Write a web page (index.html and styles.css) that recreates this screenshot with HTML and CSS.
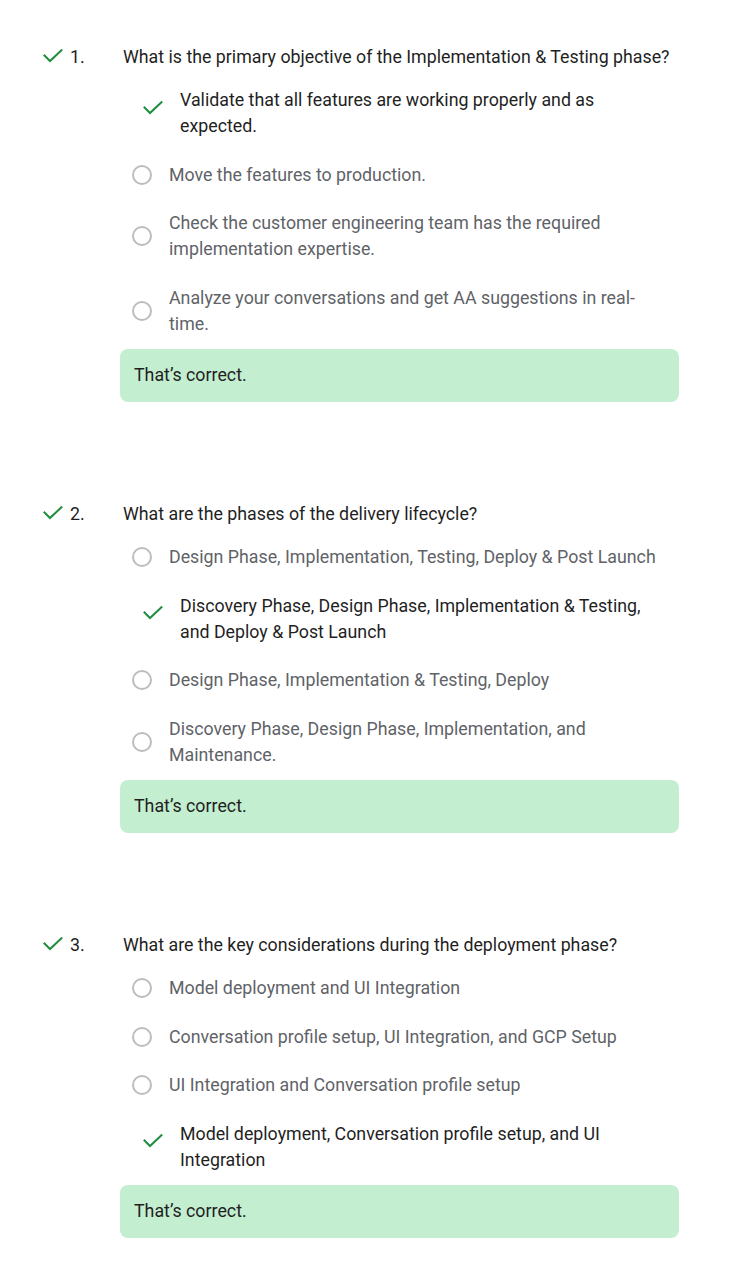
FILE: index.html
```html
<!DOCTYPE html>
<html lang="en">
<head>
<meta charset="utf-8">
<title>Quiz results</title>
<link rel="stylesheet" href="styles.css">
</head>
<body>
<div class="quiz">

  <section class="question">
    <div class="q-head">
      <div class="q-mark">
        <svg class="check" width="20" height="14" viewBox="0 0 20 14"><polyline points="1.5,6.5 7,12 18.5,1.2"/></svg>
        <span class="q-num">1.</span>
      </div>
      <div class="q-text">What is the primary objective of the Implementation &amp; Testing phase?</div>
    </div>
    <div class="q-body">
      <div class="options">
        <div class="option correct">
          <svg class="check" width="20" height="14" viewBox="0 0 20 14"><polyline points="1.5,6.5 7,12 18.5,1.2"/></svg>
          <span class="opt-text">Validate that all features are working properly and as expected.</span>
        </div>
        <div class="option">
          <span class="radio"></span>
          <span class="opt-text">Move the features to production.</span>
        </div>
        <div class="option">
          <span class="radio"></span>
          <span class="opt-text">Check the customer engineering team has the required implementation expertise.</span>
        </div>
        <div class="option">
          <span class="radio"></span>
          <span class="opt-text">Analyze your conversations and get AA suggestions in real-time.</span>
        </div>
      </div>
      <div class="feedback">That’s correct.</div>
    </div>
  </section>

  <section class="question">
    <div class="q-head">
      <div class="q-mark">
        <svg class="check" width="20" height="14" viewBox="0 0 20 14"><polyline points="1.5,6.5 7,12 18.5,1.2"/></svg>
        <span class="q-num">2.</span>
      </div>
      <div class="q-text">What are the phases of the delivery lifecycle?</div>
    </div>
    <div class="q-body">
      <div class="options">
        <div class="option">
          <span class="radio"></span>
          <span class="opt-text">Design Phase, Implementation, Testing, Deploy &amp; Post Launch</span>
        </div>
        <div class="option correct">
          <svg class="check" width="20" height="14" viewBox="0 0 20 14"><polyline points="1.5,6.5 7,12 18.5,1.2"/></svg>
          <span class="opt-text">Discovery Phase, Design Phase, Implementation &amp; Testing, and Deploy &amp; Post Launch</span>
        </div>
        <div class="option">
          <span class="radio"></span>
          <span class="opt-text">Design Phase, Implementation &amp; Testing, Deploy</span>
        </div>
        <div class="option">
          <span class="radio"></span>
          <span class="opt-text">Discovery Phase, Design Phase, Implementation, and Maintenance.</span>
        </div>
      </div>
      <div class="feedback">That’s correct.</div>
    </div>
  </section>

  <section class="question">
    <div class="q-head">
      <div class="q-mark">
        <svg class="check" width="20" height="14" viewBox="0 0 20 14"><polyline points="1.5,6.5 7,12 18.5,1.2"/></svg>
        <span class="q-num">3.</span>
      </div>
      <div class="q-text">What are the key considerations during the deployment phase?</div>
    </div>
    <div class="q-body">
      <div class="options">
        <div class="option">
          <span class="radio"></span>
          <span class="opt-text">Model deployment and UI Integration</span>
        </div>
        <div class="option">
          <span class="radio"></span>
          <span class="opt-text">Conversation profile setup, UI Integration, and GCP Setup</span>
        </div>
        <div class="option">
          <span class="radio"></span>
          <span class="opt-text">UI Integration and Conversation profile setup</span>
        </div>
        <div class="option correct">
          <svg class="check" width="20" height="14" viewBox="0 0 20 14"><polyline points="1.5,6.5 7,12 18.5,1.2"/></svg>
          <span class="opt-text">Model deployment, Conversation profile setup, and UI Integration</span>
        </div>
      </div>
      <div class="feedback">That’s correct.</div>
    </div>
  </section>

</div>
</body>
</html>
```

FILE: styles.css
```css
* { box-sizing: border-box; }

html, body {
  margin: 0;
  padding: 0;
  background: #ffffff;
}

body {
  font-family: Roboto, "Noto Sans", "Liberation Sans", sans-serif;
  font-size: 17.8px;
  line-height: 26px;
  color: #1f1f1f;
}

.quiz {
  padding: 44px 59px 0 41px;
  display: flex;
  flex-direction: column;
  gap: 99.5px;
}

.q-head {
  display: flex;
  align-items: flex-start;
}

.q-mark {
  flex: none;
  width: 82px;
  display: flex;
  align-items: flex-start;
}

.q-mark .check {
  margin-left: 2px;
  margin-top: 4.5px;
  flex: none;
}

.q-num {
  margin-left: 7px;
  color: #1f1f1f;
}

.q-text {
  flex: 1;
  color: #1f1f1f;
}

.check polyline {
  fill: none;
  stroke: #1e8e3e;
  stroke-width: 2;
  stroke-linecap: square;
  stroke-linejoin: miter;
}

.q-body {
  margin-left: 79px;
  margin-top: 17px;
}

.options {
  display: flex;
  flex-direction: column;
  gap: 22.5px;
}

.option {
  display: flex;
  align-items: center;
  padding-right: 14px;
  color: #5f6368;
}

.radio {
  flex: none;
  width: 20px;
  height: 20px;
  border: 2px solid #bdbdbd;
  border-radius: 50%;
  margin-left: 12px;
  margin-right: 17px;
}

.option.correct {
  align-items: flex-start;
  color: #1f1f1f;
}

.option.correct .check {
  flex: none;
  margin-left: 23px;
  margin-right: 17px;
  margin-top: 13.5px;
}

.opt-text {
  flex: 1;
}

.feedback {
  margin-top: 12px;
  background: #c4eed0;
  border-radius: 8px;
  padding: 13.5px 14px;
  color: #1f1f1f;
}
```
